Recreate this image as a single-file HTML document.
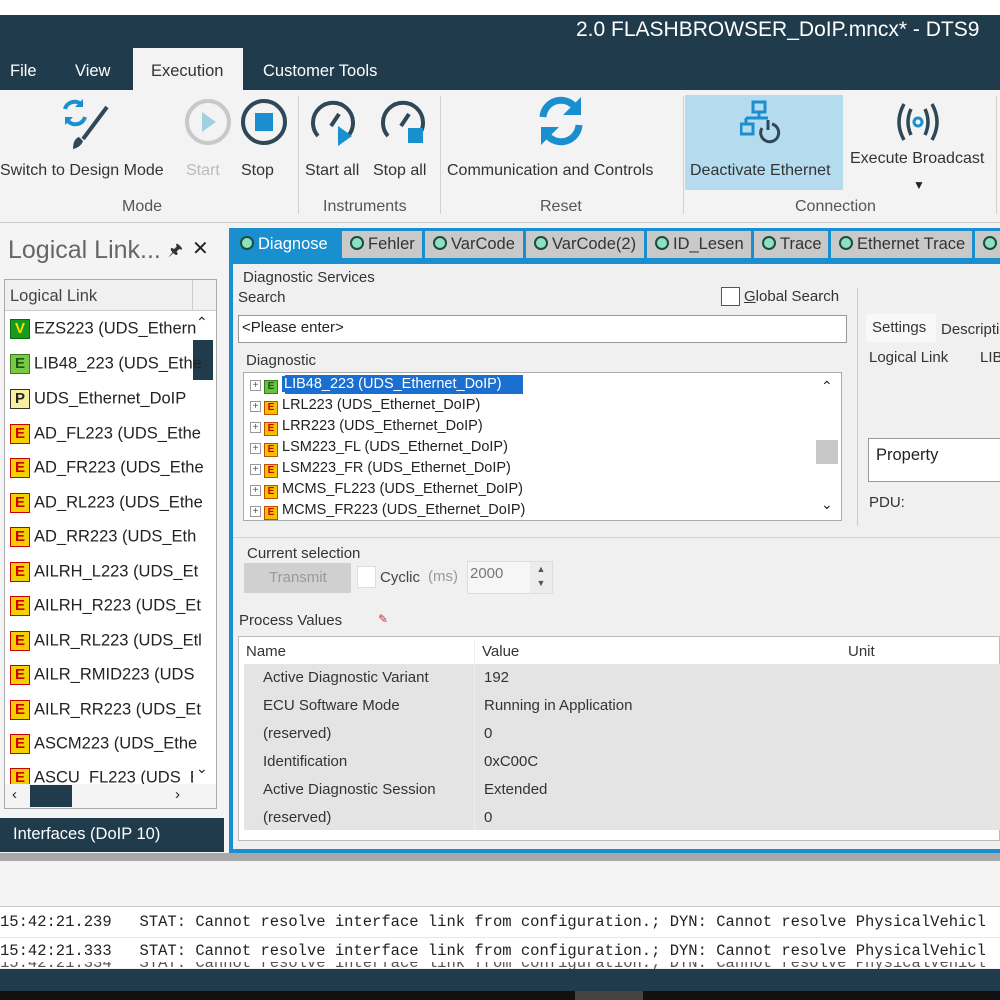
<!DOCTYPE html>
<html><head><meta charset="utf-8"><style>
*{margin:0;padding:0;box-sizing:border-box}
body{width:1000px;height:1000px;overflow:hidden;background:#f2f2f2;font-family:"Liberation Sans",sans-serif;position:relative;color:#222}
.a{position:absolute;white-space:nowrap}
.rb{font-size:16px;color:#333}
.gl{font-size:16px;color:#555}
.sep{position:absolute;width:1px;background:#d0d0d0;top:96px;height:118px}
.ic{display:inline-block;width:20px;height:20px;font-size:15px;font-weight:bold;text-align:center;line-height:18px;border:1px solid #c00;background:#f4d000;color:#c00;vertical-align:middle;margin-right:4px}
.row{position:absolute;left:10px;font-size:16.5px;color:#222}
.tab{position:absolute;top:231px;height:27px;background:#c9c9c9;font-size:16.5px;color:#333;padding:4px 0 0 8px}
.dot{display:inline-block;width:14px;height:14px;border-radius:50%;border:2px solid #1d4d3a;background:#8de0c0;vertical-align:-1px;margin-right:4px}
.tr{position:absolute;left:250px;font-size:14.5px;color:#222}
.sq{display:inline-block;width:11px;height:11px;border:1px solid #999;font-size:10px;line-height:9px;text-align:center;color:#555;margin-right:3px;vertical-align:0}
.ei{display:inline-block;width:14px;height:14px;background:#f4c000;border:1px solid #c05000;color:#c00;font-size:10px;font-weight:bold;line-height:12px;text-align:center;vertical-align:-1px;margin-right:4px}
.pv{position:absolute;font-size:15px;color:#333}
.log{position:absolute;left:0;font-family:"Liberation Mono",monospace;font-size:15.5px;color:#222;white-space:pre}
</style></head><body>
<div class="a" style="left:0;top:0;width:1000px;height:15px;background:#fff"></div>
<div class="a" style="left:0;top:15px;width:1000px;height:75px;background:#1f3b4c"></div>
<div class="a" style="left:576px;top:18px;font-size:21px;color:#fff">2.0 FLASHBROWSER_DoIP.mncx* - DTS9</div>
<div class="a" style="left:133px;top:48px;width:110px;height:44px;background:#f3f3f3"></div>
<div class="a" style="left:10px;top:62px;font-size:16.5px;color:#fff">File</div>
<div class="a" style="left:75px;top:62px;font-size:16.5px;color:#fff">View</div>
<div class="a" style="left:151px;top:62px;font-size:16.5px;color:#333">Execution</div>
<div class="a" style="left:263px;top:62px;font-size:16.5px;color:#fff">Customer Tools</div>
<div class="a" style="left:0;top:90px;width:1000px;height:132px;background:#f3f3f3"></div>
<div class="a" style="left:685px;top:95px;width:158px;height:95px;background:#b5dcee"></div>
<svg class="a" style="left:55px;top:95px" width="60" height="60" viewBox="0 0 60 60"><path d="M10 14a10 10 0 0 1 17-4" stroke="#1a8fd0" stroke-width="4" fill="none"/><path d="M28 4v8h-8z" fill="#1a8fd0"/><path d="M30 22a10 10 0 0 1-17 4" stroke="#1a8fd0" stroke-width="4" fill="none"/><path d="M10 30v-8h8z" fill="#1a8fd0"/><path d="M52 12L28 44" stroke="#2f4858" stroke-width="4"/><path d="M24 42q-6 2-6 12q8-2 10-8z" fill="#2f4858"/></svg>
<svg class="a" style="left:184px;top:98px" width="48" height="48"><circle cx="24" cy="24" r="21" stroke="#c8c8c8" stroke-width="4" fill="none"/><path d="M18 14l14 10-14 10z" fill="#9fd3dc"/></svg>
<svg class="a" style="left:240px;top:98px" width="48" height="48"><circle cx="24" cy="24" r="21" stroke="#2f4858" stroke-width="4" fill="none"/><rect x="15" y="15" width="18" height="18" fill="#1a8fd0"/></svg>
<svg class="a" style="left:308px;top:98px" width="50" height="50"><path d="M10 38A20 20 0 1 1 40 38" stroke="#2f4858" stroke-width="4" fill="none"/><path d="M23 28l8-12" stroke="#2f4858" stroke-width="4"/><path d="M30 28l14 10-14 10z" fill="#1a8fd0"/></svg>
<svg class="a" style="left:378px;top:98px" width="50" height="50"><path d="M10 38A20 20 0 1 1 40 38" stroke="#2f4858" stroke-width="4" fill="none"/><path d="M23 28l8-12" stroke="#2f4858" stroke-width="4"/><rect x="30" y="30" width="15" height="15" fill="#1a8fd0"/></svg>
<svg class="a" style="left:535px;top:95px" width="52" height="52"><path d="M8 22A18 18 0 0 1 40 12" stroke="#1a8fd0" stroke-width="7" fill="none"/><path d="M46 2v18h-18z" fill="#1a8fd0"/><path d="M44 30A18 18 0 0 1 12 40" stroke="#1a8fd0" stroke-width="7" fill="none"/><path d="M6 50v-18h18z" fill="#1a8fd0"/></svg>
<svg class="a" style="left:740px;top:100px" width="50" height="45"><rect x="13" y="2" width="12" height="10" stroke="#1a8fd0" stroke-width="3" fill="none"/><path d="M19 12v6M6 18h22M6 18v6" stroke="#1a8fd0" stroke-width="3" fill="none"/><rect x="1" y="24" width="12" height="10" stroke="#1a8fd0" stroke-width="3" fill="none"/><path d="M22 28a9 9 0 1 0 10 -4" stroke="#2f4858" stroke-width="3" fill="none"/><path d="M28 20v10" stroke="#2f4858" stroke-width="3"/></svg>
<svg class="a" style="left:892px;top:100px" width="52" height="44"><path d="M12 4q-10 18 0 36M19 9q-6 13 0 26M40 4q10 18 0 36M33 9q6 13 0 26" stroke="#2f4858" stroke-width="3.5" fill="none"/><circle cx="26" cy="22" r="4" stroke="#1a8fd0" stroke-width="3" fill="none"/></svg>
<div class="a rb" style="left:0;top:162px">Switch to Design Mode</div>
<div class="a rb" style="left:186px;top:162px;color:#bbb">Start</div>
<div class="a rb" style="left:241px;top:162px">Stop</div>
<div class="a rb" style="left:305px;top:162px">Start all</div>
<div class="a rb" style="left:373px;top:162px">Stop all</div>
<div class="a rb" style="left:447px;top:162px">Communication and Controls</div>
<div class="a rb" style="left:690px;top:162px">Deactivate Ethernet</div>
<div class="a rb" style="left:850px;top:150px">Execute Broadcast</div>
<div class="a" style="left:913px;top:178px;font-size:12px">▼</div>
<div class="a gl" style="left:122px;top:198px">Mode</div>
<div class="a gl" style="left:323px;top:198px">Instruments</div>
<div class="a gl" style="left:540px;top:198px">Reset</div>
<div class="a gl" style="left:795px;top:198px">Connection</div>
<div class="sep" style="left:298px"></div><div class="sep" style="left:440px"></div><div class="sep" style="left:683px"></div><div class="sep" style="left:996px"></div>
<div class="a" style="left:0;top:222px;width:1000px;height:1px;background:#ccc"></div>
<div class="a" style="left:0;top:224px;width:226px;height:628px;background:#f4f4f4"></div>
<div class="a" style="left:8px;top:236px;font-size:25px;color:#666">Logical Link...</div>
<div class="a" style="left:168px;top:239px;font-size:16px;color:#333">🖈</div>
<div class="a" style="left:192px;top:236px;font-size:20px;color:#222">✕</div>
<div class="a" style="left:4px;top:279px;width:213px;height:530px;background:#fff;border:1px solid #aaa"></div>
<div class="a" style="left:5px;top:280px;width:211px;height:31px;background:#f0f0f0;border-bottom:1px solid #ccc"></div>
<div class="a" style="left:192px;top:280px;width:1px;height:31px;background:#ccc"></div>
<div class="a" style="left:10px;top:287px;font-size:16.5px;color:#444">Logical Link</div>
<div class="a" style="left:193px;top:340px;width:20px;height:40px;background:#1f3b4c"></div>
<div class="a" style="left:196px;top:314px;font-size:14px">⌃</div>
<div class="a" style="left:196px;top:760px;font-size:14px">⌄</div>
<div class="row" style="top:319px"><span class="ic" style="background:#1a9a1a;color:#f4e000;border-color:#0a6a0a">V</span>EZS223 (UDS_Ethern</div>
<div class="row" style="top:354px"><span class="ic" style="background:#7ac943;color:#155a10;border-color:#3a7a1a">E</span>LIB48_223 (UDS_Ethe</div>
<div class="row" style="top:389px"><span class="ic" style="background:#f8f0a0;color:#222;border-color:#333">P</span>UDS_Ethernet_DoIP</div>
<div class="row" style="top:424px"><span class="ic">E</span>AD_FL223 (UDS_Ethe</div>
<div class="row" style="top:458px"><span class="ic">E</span>AD_FR223 (UDS_Ethe</div>
<div class="row" style="top:493px"><span class="ic">E</span>AD_RL223 (UDS_Ethe</div>
<div class="row" style="top:527px"><span class="ic">E</span>AD_RR223 (UDS_Eth</div>
<div class="row" style="top:562px"><span class="ic">E</span>AILRH_L223 (UDS_Et</div>
<div class="row" style="top:596px"><span class="ic">E</span>AILRH_R223 (UDS_Et</div>
<div class="row" style="top:631px"><span class="ic">E</span>AILR_RL223 (UDS_Etl</div>
<div class="row" style="top:665px"><span class="ic">E</span>AILR_RMID223 (UDS</div>
<div class="row" style="top:700px"><span class="ic">E</span>AILR_RR223 (UDS_Et</div>
<div class="row" style="top:734px"><span class="ic">E</span>ASCM223 (UDS_Ethe</div>
<div class="a" style="left:5px;top:766px;width:188px;height:18px;overflow:hidden"><div class="row" style="top:2px;left:5px"><span class="ic">E</span>ASCU_FL223 (UDS_E</div></div>
<div class="a" style="left:5px;top:784px;width:211px;height:24px;background:#f4f4f4"></div>
<div class="a" style="left:30px;top:785px;width:42px;height:22px;background:#1f3b4c"></div>
<div class="a" style="left:12px;top:786px;font-size:15px">‹</div>
<div class="a" style="left:175px;top:786px;font-size:15px">›</div>
<div class="a" style="left:0;top:818px;width:224px;height:34px;background:#1f3b4c"></div>
<div class="a" style="left:13px;top:825px;font-size:16.5px;color:#fff">Interfaces (DoIP 10)</div>
<div class="a" style="left:229px;top:228px;width:771px;height:625px;background:#1a8fd0"></div>
<div class="a" style="left:233px;top:264px;width:767px;height:585px;background:#f0f0f0"></div>
<div class="a" style="left:232px;top:231px;width:108px;height:30px;background:#1a8fd0;font-size:16.5px;color:#fff;padding:4px 0 0 8px"><span class="dot"></span>Diagnose</div>
<div class="tab" style="left:342px;width:80px"><span class="dot"></span>Fehler</div>
<div class="tab" style="left:425px;width:98px"><span class="dot"></span>VarCode</div>
<div class="tab" style="left:526px;width:118px"><span class="dot"></span>VarCode(2)</div>
<div class="tab" style="left:647px;width:104px"><span class="dot"></span>ID_Lesen</div>
<div class="tab" style="left:754px;width:74px"><span class="dot"></span>Trace</div>
<div class="tab" style="left:831px;width:141px"><span class="dot"></span>Ethernet Trace</div>
<div class="tab" style="left:975px;width:30px"><span class="dot"></span></div>
<div class="a" style="left:243px;top:269px;font-size:15px;color:#333">Diagnostic Services</div>
<div class="a" style="left:238px;top:289px;font-size:15px;color:#333">Search</div>
<div class="a" style="left:721px;top:287px;width:19px;height:19px;border:1px solid #555;background:#fff"></div>
<div class="a" style="left:744px;top:288px;font-size:15px;color:#333"><u>G</u>lobal Search</div>
<div class="a" style="left:238px;top:315px;width:609px;height:28px;background:#fff;border:1px solid #999"></div>
<div class="a" style="left:242px;top:319px;font-size:15px;color:#222">&lt;Please enter&gt;</div>
<div class="a" style="left:246px;top:352px;font-size:15px;color:#333">Diagnostic</div>
<div class="a" style="left:243px;top:372px;width:599px;height:149px;background:#fff;border:1px solid #aaa"></div>
<div class="a" style="left:816px;top:440px;width:22px;height:24px;background:#c8c8c8"></div>
<div class="a" style="left:821px;top:378px;font-size:14px">⌃</div>
<div class="a" style="left:821px;top:496px;font-size:14px">⌄</div>
<div class="a" style="left:285px;top:375px;width:238px;height:19px;background:#1a6fd0"></div>
<div class="tr" style="top:376px"><span class="sq">+</span><span class="ei" style="background:#6ac040;color:#155a10;border-color:#3a7a1a">E</span><span style="color:#fff;background:#1a6fd0;padding:0 2px">LIB48_223 (UDS_Ethernet_DoIP)</span></div>
<div class="tr" style="top:397px"><span class="sq">+</span><span class="ei">E</span>LRL223 (UDS_Ethernet_DoIP)</div>
<div class="tr" style="top:418px"><span class="sq">+</span><span class="ei">E</span>LRR223 (UDS_Ethernet_DoIP)</div>
<div class="tr" style="top:439px"><span class="sq">+</span><span class="ei">E</span>LSM223_FL (UDS_Ethernet_DoIP)</div>
<div class="tr" style="top:460px"><span class="sq">+</span><span class="ei">E</span>LSM223_FR (UDS_Ethernet_DoIP)</div>
<div class="tr" style="top:481px"><span class="sq">+</span><span class="ei">E</span>MCMS_FL223 (UDS_Ethernet_DoIP)</div>
<div class="a" style="left:244px;top:500px;width:570px;height:20px;overflow:hidden"><div class="tr" style="top:2px;left:6px"><span class="sq">+</span><span class="ei">E</span>MCMS_FR223 (UDS_Ethernet_DoIP)</div></div>
<div class="a" style="left:857px;top:288px;width:1px;height:238px;background:#ccc"></div>
<div class="a" style="left:866px;top:314px;width:70px;height:28px;background:#f8f8f8"></div>
<div class="a" style="left:872px;top:319px;font-size:15px;color:#333">Settings</div>
<div class="a" style="left:941px;top:321px;font-size:15px;color:#333">Descripti</div>
<div class="a" style="left:869px;top:349px;font-size:15px;color:#333">Logical Link</div>
<div class="a" style="left:980px;top:349px;font-size:15px;color:#333">LIB</div>
<div class="a" style="left:868px;top:438px;width:140px;height:44px;background:#fff;border:1px solid #999"></div>
<div class="a" style="left:876px;top:446px;font-size:16.5px;color:#222">Property</div>
<div class="a" style="left:869px;top:494px;font-size:15px;color:#333">PDU:</div>
<div class="a" style="left:233px;top:537px;width:767px;height:1px;background:#d4d4d4"></div>
<div class="a" style="left:247px;top:545px;font-size:15px;color:#333">Current selection</div>
<div class="a" style="left:244px;top:563px;width:107px;height:30px;background:#d0d0d0"></div>
<div class="a" style="left:269px;top:569px;font-size:15px;color:#999">Transmit</div>
<div class="a" style="left:357px;top:566px;width:19px;height:22px;background:#fff;border:1px solid #ddd"></div>
<div class="a" style="left:380px;top:569px;font-size:15px;color:#444">Cyclic</div>
<div class="a" style="left:428px;top:568px;font-size:15px;color:#999">(ms)</div>
<div class="a" style="left:467px;top:561px;width:86px;height:33px;background:#f6f6f6;border:1px solid #ddd"></div>
<div class="a" style="left:470px;top:565px;font-size:15px;color:#777">2000</div>
<div class="a" style="left:530px;top:562px;width:22px;height:31px;background:#ececec;font-size:9px;color:#555;text-align:center;line-height:14px">▲<br>▼</div>
<div class="a" style="left:239px;top:612px;font-size:15px;color:#333">Process Values</div>
<div class="a" style="left:378px;top:612px;font-size:12px;color:#c33">✎</div>
<div class="a" style="left:238px;top:636px;width:762px;height:205px;background:#fff;border:1px solid #bbb"></div>
<div class="a" style="left:244px;top:664px;width:756px;height:166px;background:#e4e4e4"></div>
<div class="a" style="left:474px;top:640px;width:1px;height:190px;background:#eee"></div>
<div class="pv" style="left:246px;top:643px">Name</div><div class="pv" style="left:482px;top:643px">Value</div><div class="pv" style="left:848px;top:643px">Unit</div>
<div class="pv" style="left:263px;top:669px">Active Diagnostic Variant</div><div class="pv" style="left:484px;top:669px">192</div>
<div class="pv" style="left:263px;top:697px">ECU Software Mode</div><div class="pv" style="left:484px;top:697px">Running in Application</div>
<div class="pv" style="left:263px;top:725px">(reserved)</div><div class="pv" style="left:484px;top:725px">0</div>
<div class="pv" style="left:263px;top:753px">Identification</div><div class="pv" style="left:484px;top:753px">0xC00C</div>
<div class="pv" style="left:263px;top:781px">Active Diagnostic Session</div><div class="pv" style="left:484px;top:781px">Extended</div>
<div class="pv" style="left:263px;top:809px">(reserved)</div><div class="pv" style="left:484px;top:809px">0</div>
<div class="a" style="left:0;top:853px;width:1000px;height:8px;background:#a8a8a8"></div>
<div class="a" style="left:0;top:861px;width:1000px;height:45px;background:#f4f4f4"></div>
<div class="a" style="left:0;top:906px;width:1000px;height:62px;background:#fff;border-top:1px solid #ccc"></div>
<div class="a" style="left:0;top:937px;width:1000px;height:1px;background:#e2eaf0"></div>
<div class="log" style="top:913px">15:42:21.239   STAT: Cannot resolve interface link from configuration.; DYN: Cannot resolve PhysicalVehicl</div>
<div class="log" style="top:942px">15:42:21.333   STAT: Cannot resolve interface link from configuration.; DYN: Cannot resolve PhysicalVehicl</div>
<div class="a" style="left:0;top:962px;width:1000px;height:7px;overflow:hidden"><div class="log" style="top:-8px;color:#555">15:42:21.334   STAT: Cannot resolve interface link from configuration.; DYN: Cannot resolve PhysicalVehicl</div></div>
<div class="a" style="left:0;top:969px;width:1000px;height:22px;background:#1f3b4c"></div>
<div class="a" style="left:0;top:991px;width:1000px;height:9px;background:#111"></div>
<div class="a" style="left:575px;top:991px;width:68px;height:9px;background:#444"></div>
</body></html>
